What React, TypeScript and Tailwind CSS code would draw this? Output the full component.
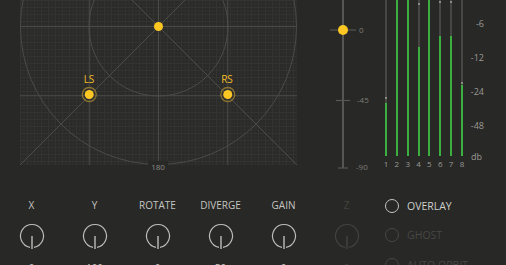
import React from "react";

const FONT = { fontFamily: '"Open Sans", "Liberation Sans", sans-serif' };

function Canvas() {
  const c = 138.5;
  const cy = 26.5;
  const q = 69.25;
  const line = "#4b4b48";
  return (
    <div className="relative w-[277px] h-[165px] bg-[#2a2a28] bg-[linear-gradient(#333331_1px,transparent_1px),linear-gradient(90deg,#333331_1px,transparent_1px),linear-gradient(#2f2f2d_1px,transparent_1px),linear-gradient(90deg,#2f2f2d_1px,transparent_1px)] bg-[size:7px_7px,7px_7px,3.5px_3.5px,3.5px_3.5px]">
      <svg width="277" height="165" viewBox="0 0 277 165" className="block">
        <circle cx={c} cy={cy} r={138} fill="none" stroke={line} strokeWidth="1" />
        <circle cx={c} cy={cy} r={69.5} fill="none" stroke={line} strokeWidth="1" />
        <line x1={c - q} y1={0} x2={c - q} y2={165} stroke={line} />
        <line x1={c} y1={0} x2={c} y2={165} stroke={line} />
        <line x1={c + q} y1={0} x2={c + q} y2={165} stroke={line} />
        <line x1={0} y1={cy} x2={277} y2={cy} stroke={line} />
        <line x1={0} y1={cy + q} x2={277} y2={cy + q} stroke={line} />
        <line x1={0} y1={165} x2={277} y2={-112} stroke={line} />
        <line x1={0} y1={-112} x2={277} y2={165} stroke={line} />
        <circle cx={c} cy={cy} r={4.5} fill="#fcc623" />
        <circle cx={c - q} cy={94.5} r={7} fill="none" stroke="#8c7432" strokeWidth="1.3" />
        <circle cx={c - q} cy={94.5} r={4.5} fill="#fcc623" />
        <circle cx={c + q} cy={94.5} r={7} fill="none" stroke="#8c7432" strokeWidth="1.3" />
        <circle cx={c + q} cy={94.5} r={4.5} fill="#fcc623" />
      </svg>
      <div className="absolute left-[60px] top-[73px] w-[18px] text-center text-[10px] leading-[12px] text-[#f2bd2a]" style={FONT}>LS</div>
      <div className="absolute left-[198px] top-[73px] w-[18px] text-center text-[10px] leading-[12px] text-[#f2bd2a]" style={FONT}>RS</div>
      <div className="absolute left-[128px] top-[161px] w-[20px] text-center text-[8px] leading-[11px] text-[#8a8a86] bg-[#282826]" style={FONT}>180</div>
    </div>
  );
}

function Slider() {
  return (
    <div className="relative w-[50px] h-[172px] ml-[23px]">
      <svg width="50" height="172" className="block">
        <line x1="23" y1="0" x2="23" y2="168" stroke="#565653" strokeWidth="2" />
        <line x1="10" y1="30" x2="36" y2="30" stroke="#4a4a47" strokeWidth="1.5" />
        <line x1="16" y1="100.5" x2="30" y2="100.5" stroke="#565653" strokeWidth="1.2" />
        <line x1="18" y1="168" x2="28" y2="168" stroke="#565653" strokeWidth="1.2" />
        <circle cx="23" cy="30" r="5" fill="#fcc623" />
      </svg>
      <div className="absolute left-[39px] top-[24px] text-[8px] leading-[12px] text-[#7c7c78]" style={FONT}>0</div>
      <div className="absolute left-[37px] top-[94px] text-[8px] leading-[12px] text-[#7c7c78]" style={FONT}>-45</div>
      <div className="absolute left-[36px] top-[161px] text-[8px] leading-[12px] text-[#7c7c78]" style={FONT}>-90</div>
    </div>
  );
}

const meters = [
  { green: 103, peak: 97 },
  { green: 0, peak: -1 },
  { green: 0, peak: -1 },
  { green: 47, peak: 3 },
  { green: 0, peak: -1 },
  { green: 36, peak: 1 },
  { green: 36, peak: 1 },
  { green: 85, peak: 82 },
];

function Meters() {
  return (
    <div className="flex ml-[15px] w-[78px] justify-between">
      {meters.map((m, i) => (
        <div key={i} className="flex flex-col items-center w-[2px]">
          <div className="relative w-[2px] h-[159px] bg-[#464643]">
            <div
              className="absolute left-0 right-0 bottom-0 bg-[#3caf40]"
              style={{ top: m.green }}
            />
            {m.peak >= 0 && (
              <div className="absolute left-0 right-0 h-[2px] bg-[#8a8a86]" style={{ top: m.peak }} />
            )}
          </div>
          <div className="mt-[2px] text-[8px] leading-[12px] text-[#9a9a96]" style={FONT}>
            {i + 1}
          </div>
        </div>
      ))}
    </div>
  );
}

function Scale() {
  const labels = ["-6", "-12", "-24", "-48"];
  return (
    <div className="flex flex-col items-end w-[21px] pt-[17px] text-[9px] leading-[14px] text-[#9a9a96]" style={FONT}>
      {labels.map((l) => (
        <div key={l} className="h-[34px]">{l}</div>
      ))}
      <div className="-mt-[3px] pr-[2px]">db</div>
    </div>
  );
}

function Knob({ dim }: { dim?: boolean }) {
  const col = dim ? "#434340" : "#bdbdb9";
  const r = 11.5;
  const cx = 13;
  const cy = 13;
  const a1 = (100 * Math.PI) / 180;
  const a2 = (80 * Math.PI) / 180;
  const x1 = cx + r * Math.cos(a1);
  const y1 = cy + r * Math.sin(a1);
  const x2 = cx + r * Math.cos(a2);
  const y2 = cy + r * Math.sin(a2);
  return (
    <svg width="26" height="27" className="block">
      <path d={`M ${x1} ${y1} A ${r} ${r} 0 1 1 ${x2} ${y2}`} fill="none" stroke={col} strokeWidth="1.2" />
      <line x1={cx} y1={cy} x2={cx} y2={26} stroke={col} strokeWidth="1.4" />
    </svg>
  );
}

const knobs = [
  { label: "X", value: "0" },
  { label: "Y", value: "100" },
  { label: "ROTATE", value: "0" },
  { label: "DIVERGE", value: "50" },
  { label: "GAIN", value: "0" },
  { label: "Z", value: "0", dim: true },
];

function Radio({ label, dim }: { label: string; dim?: boolean }) {
  return (
    <div className="flex items-center h-[29.5px]">
      <div className={`w-[14px] h-[14px] rounded-full border-[1.5px] ${dim ? "border-[#474744]" : "border-[#c4c4c0]"}`} />
      <div className={`ml-[8px] text-[10.5px] leading-[14px] ${dim ? "text-[#474744]" : "text-[#cfcfcb]"}`} style={FONT}>
        {label}
      </div>
    </div>
  );
}

export default function App() {
  return (
    <div className="w-[506px] h-[265px] overflow-hidden bg-[#282826]" style={FONT}>
      <div className="flex h-[170px]">
        <div className="ml-[20px]">
          <Canvas />
        </div>
        <Slider />
        <Meters />
        <Scale />
      </div>
      <div className="flex pt-[28px]">
        <div className="flex">
          {knobs.map((k) => (
            <div key={k.label} className="w-[63px] flex flex-col items-center">
              <div className={`h-[14px] text-[10px] leading-[14px] ${k.dim ? "text-[#434340]" : "text-[#c4c4c0]"}`}>{k.label}</div>
              <div className="mt-[11px]">
                <Knob dim={k.dim} />
              </div>
              <div className={`mt-[11px] text-[10px] leading-[14px] ${k.dim ? "text-[#434340]" : "text-[#c4c4c0]"}`}>{k.value}</div>
            </div>
          ))}
        </div>
        <div className="ml-[7px] -mt-[7px] flex flex-col">
          <Radio label="OVERLAY" />
          <Radio label="GHOST" dim />
          <Radio label="AUTO ORBIT" dim />
        </div>
      </div>
    </div>
  );
}
